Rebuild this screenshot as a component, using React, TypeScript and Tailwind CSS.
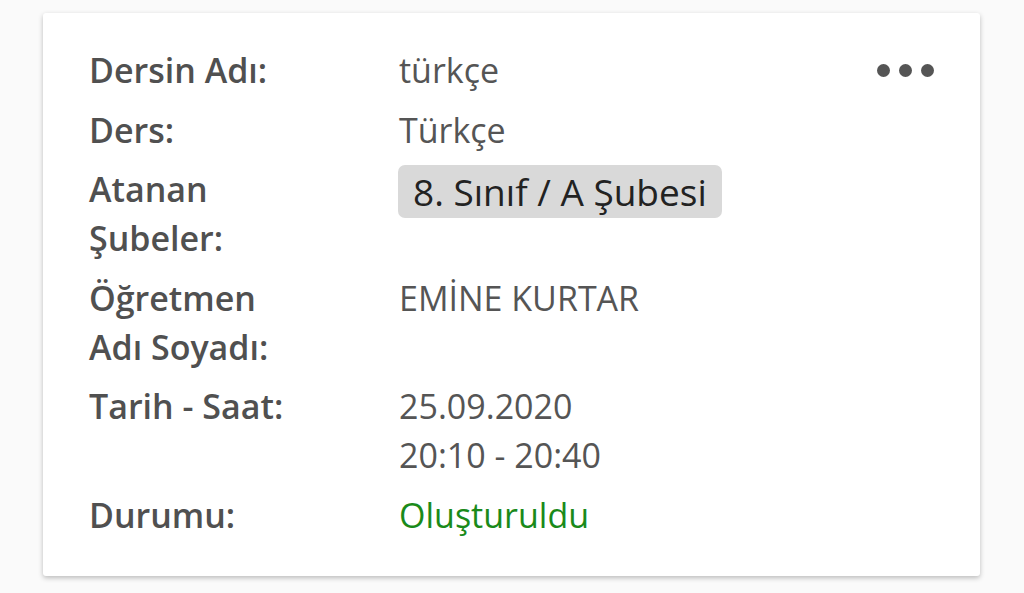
function Row({ label, children }: { label: React.ReactNode; children: React.ReactNode }) {
  return (
    <div className="flex">
      <div className="w-[310px] shrink-0 font-semibold text-[#505050]">{label}</div>
      <div className="flex-1">{children}</div>
    </div>
  );
}

export default function App() {
  return (
    <div className="w-[1024px] h-[593px] bg-[#fafafa] pt-[13px] pl-[43px]" style={{ fontFamily: '"Open Sans", sans-serif' }}>
      <div className="relative w-[937px] h-[563px] bg-white rounded-[3px] shadow-[0_2px_5px_rgba(0,0,0,0.25)] pl-[46px] pt-[33px] text-[34px] leading-[49px] text-[#555]">
        <div className="absolute right-[46px] top-[51px] flex gap-[9px]">
          <span className="w-[13px] h-[13px] rounded-full bg-[#555]" />
          <span className="w-[13px] h-[13px] rounded-full bg-[#555]" />
          <span className="w-[13px] h-[13px] rounded-full bg-[#555]" />
        </div>
        <div className="flex flex-col gap-[10.6px]">
          <Row label="Dersin Adı:">türkçe</Row>
          <Row label="Ders:">Türkçe</Row>
          <Row label={<>Atanan<br />Şubeler:</>}>
            <div className="flex items-start">
              <span className="bg-[#d9d9d9] text-[#222] rounded-[7px] px-[15px] leading-[53px] text-[37px] -ml-[1px]">8. Sınıf / A Şubesi</span>
            </div>
          </Row>
          <Row label={<>Öğretmen<br />Adı Soyadı:</>}>EMİNE KURTAR</Row>
          <Row label="Tarih - Saat:">25.09.2020<br />20:10 - 20:40</Row>
          <Row label="Durumu:"><span className="text-[#1a8a1a]">Oluşturuldu</span></Row>
        </div>
      </div>
    </div>
  );
}
